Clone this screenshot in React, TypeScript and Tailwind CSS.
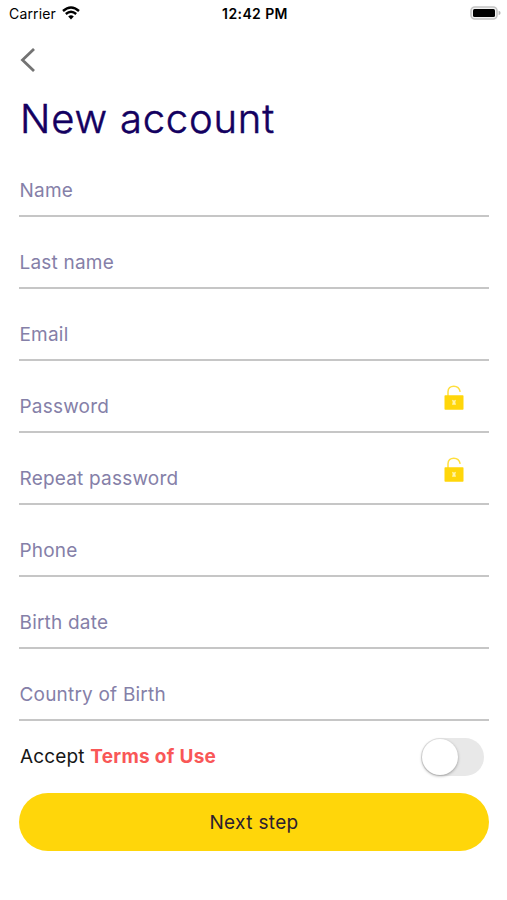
import { useState } from 'react';

interface Field {
  label: string;
  secure?: boolean;
}

const FIELDS: Field[] = [
  { label: 'Name' },
  { label: 'Last name' },
  { label: 'Email' },
  { label: 'Password', secure: true },
  { label: 'Repeat password', secure: true },
  { label: 'Phone' },
  { label: 'Birth date' },
  { label: 'Country of Birth' },
];

function StatusBar() {
  return (
    <div className="grid h-7 grid-cols-3 items-center pl-[9px] pr-[6px] text-black">
      <div className="flex items-center gap-1.5">
        <span className="text-[14px] leading-4 tracking-[0.15px]">Carrier</span>
        <svg className="mb-0.5 h-[14px] w-[18px]" viewBox="0 0 18 14" fill="none" stroke="currentColor" strokeWidth={2.4}>
          <path d="M1 5Q9-2 17 5M3.8 8Q9 3.6 14.2 8" />
          <path d="M6.2 10.4Q9 8 11.8 10.4L9 13.5Z" fill="currentColor" stroke="none" />
        </svg>
      </div>
      <span className="text-center text-[14px] font-semibold leading-4 tracking-[0.4px]">12:42 PM</span>
      <svg className="mb-0.5 h-[14px] w-[31px] justify-self-end" viewBox="0 0 31 14">
        <rect x="1" y="1" width="26" height="12" rx="3.8" fill="#f2f2f2" stroke="#c4c4c4" strokeWidth="1.6" />
        <rect x="3" y="3" width="22" height="8" rx="1.5" fill="#000" />
        <path d="M28.6 4.8Q30.6 5.4 30.6 7T28.6 9.2Z" fill="#b5b5b5" />
      </svg>
    </div>
  );
}

function UnlockIcon() {
  return (
    <svg className="h-[26px] w-5" viewBox="0 0 20 26" fill="none">
      <path d="M4 11V6.8C4 3.2 6.5 1.2 9.8 1.2C13 1.2 15.5 3.4 16.2 6.8" stroke="#ffdf3d" strokeWidth={1.5} />
      <rect x="0.5" y="10.3" width="19" height="14.5" rx="0.8" fill="#ffd60a" />
      <path d="M8 14.8L10 15.6L12 14.8L11.3 17.2L12 19.8H8L8.7 17.2Z" fill="#fff3a6" />
    </svg>
  );
}

function FormField({ label, secure }: Field) {
  return (
    <label className="flex h-[72px] items-end justify-between border-b-2 border-[#c6c6c6] pb-3 pl-[0.5px] text-[19px] leading-6 tracking-[0.2px] text-[#8580a8]">
      {label}
      {secure && (
        <span className="mb-2 mr-[25px]">
          <UnlockIcon />
        </span>
      )}
    </label>
  );
}

export default function App() {
  const [accepted, setAccepted] = useState(false);

  return (
    <div className="min-h-[900px] w-[507px] bg-white font-['Inter',sans-serif]">
      <StatusBar />

      <header className="pl-5 pt-5">
        <button aria-label="Back" className="block">
          <svg className="h-6 w-4" viewBox="0 0 16 24" fill="none" stroke="#737373" strokeWidth={2.8}>
            <path d="M14 1L2.5 12L14 23" />
          </svg>
        </button>
        <h1 className="mt-[21px] text-[40px] font-light leading-[51px] tracking-[0.8px] text-[#130060] [-webkit-text-stroke:0.5px_#130060]">
          New account
        </h1>
      </header>

      <form className="pl-[19px] pr-[18px] pt-px" onSubmit={e => e.preventDefault()}>
        {FIELDS.map(field => (
          <FormField key={field.label} label={field.label} secure={field.secure} />
        ))}

        {/* Terms */}
        <div className="flex h-[72px] items-center justify-between pl-px pr-[5px]">
          <p className="text-[19px] leading-6 tracking-[0.15px] text-[#161616]">
            Accept <span className="font-bold tracking-[0.3px] text-[#f95757]">Terms of Use</span>
          </p>
          <button
            type="button"
            role="switch"
            aria-checked={accepted}
            aria-label="Accept terms"
            onClick={() => setAccepted(!accepted)}
            className={`flex h-[38px] w-[63px] items-center rounded-full p-px ${accepted ? 'justify-end bg-[#ffd60a]' : 'bg-[#e8e8e8]'}`}
          >
            <span className="size-9 rounded-full bg-white shadow-[0_1px_3px_rgba(0,0,0,0.35)]" />
          </button>
        </div>

        <button className="flex h-[58px] w-full items-center justify-center rounded-full bg-[#ffd60a] pt-0.5 text-[19px] tracking-[0.35px] text-[#2b2030]">
          Next step
        </button>
      </form>
    </div>
  );
}
